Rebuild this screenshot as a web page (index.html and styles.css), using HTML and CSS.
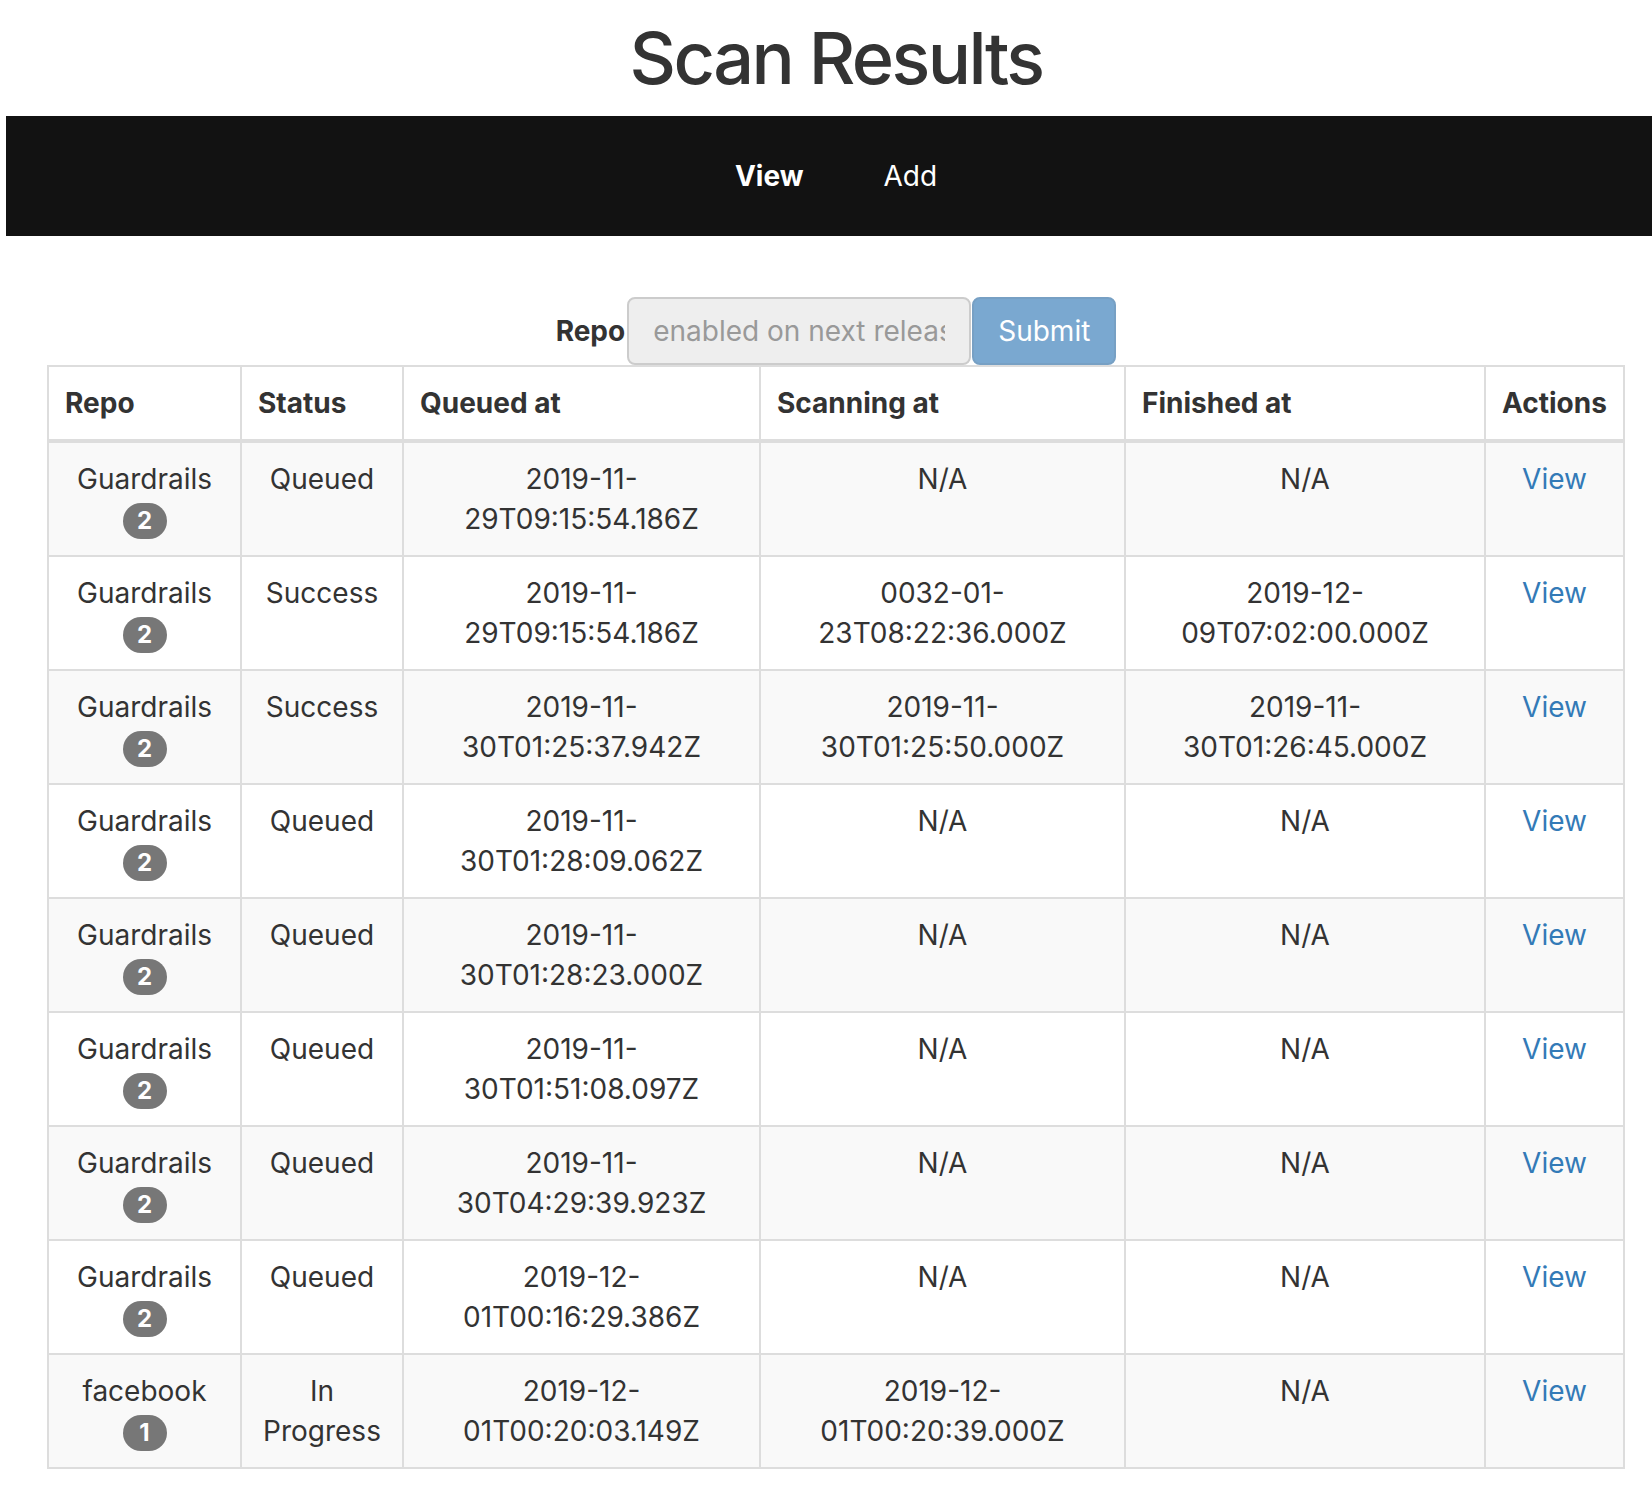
FILE: index.html
```html
<!DOCTYPE html>
<html lang="en">
<head>
<meta charset="utf-8">
<title>Scan Results</title>
<link rel="stylesheet" href="styles.css">
</head>
<body>
<div class="page">
  <h1 class="title">Scan Results</h1>
  <nav class="navbar">
    <a class="nav-link active" href="#">View</a>
    <a class="nav-link" href="#">Add</a>
  </nav>
  <form class="search-form">
    <label class="search-label" for="repo">Repo</label>
    <input class="search-input" id="repo" type="text" placeholder="enabled on next release" disabled>
    <button class="search-btn" type="button" disabled>Submit</button>
  </form>
  <table class="results">
    <colgroup>
      <col class="c-repo"><col class="c-status"><col class="c-queued"><col class="c-scan"><col class="c-fin"><col class="c-act">
    </colgroup>
    <thead>
      <tr><th>Repo</th><th>Status</th><th>Queued at</th><th>Scanning at</th><th>Finished at</th><th>Actions</th></tr>
    </thead>
    <tbody>
      <tr>
        <td>Guardrails<br><span class="badge">2</span></td>
        <td>Queued</td>
        <td>2019-11-<br>29T09:15:54.186Z</td>
        <td>N/A</td>
        <td>N/A</td>
        <td><a href="#" class="link">View</a></td>
      </tr>
      <tr>
        <td>Guardrails<br><span class="badge">2</span></td>
        <td>Success</td>
        <td>2019-11-<br>29T09:15:54.186Z</td>
        <td>0032-01-<br>23T08:22:36.000Z</td>
        <td>2019-12-<br>09T07:02:00.000Z</td>
        <td><a href="#" class="link">View</a></td>
      </tr>
      <tr>
        <td>Guardrails<br><span class="badge">2</span></td>
        <td>Success</td>
        <td>2019-11-<br>30T01:25:37.942Z</td>
        <td>2019-11-<br>30T01:25:50.000Z</td>
        <td>2019-11-<br>30T01:26:45.000Z</td>
        <td><a href="#" class="link">View</a></td>
      </tr>
      <tr>
        <td>Guardrails<br><span class="badge">2</span></td>
        <td>Queued</td>
        <td>2019-11-<br>30T01:28:09.062Z</td>
        <td>N/A</td>
        <td>N/A</td>
        <td><a href="#" class="link">View</a></td>
      </tr>
      <tr>
        <td>Guardrails<br><span class="badge">2</span></td>
        <td>Queued</td>
        <td>2019-11-<br>30T01:28:23.000Z</td>
        <td>N/A</td>
        <td>N/A</td>
        <td><a href="#" class="link">View</a></td>
      </tr>
      <tr>
        <td>Guardrails<br><span class="badge">2</span></td>
        <td>Queued</td>
        <td>2019-11-<br>30T01:51:08.097Z</td>
        <td>N/A</td>
        <td>N/A</td>
        <td><a href="#" class="link">View</a></td>
      </tr>
      <tr>
        <td>Guardrails<br><span class="badge">2</span></td>
        <td>Queued</td>
        <td>2019-11-<br>30T04:29:39.923Z</td>
        <td>N/A</td>
        <td>N/A</td>
        <td><a href="#" class="link">View</a></td>
      </tr>
      <tr>
        <td>Guardrails<br><span class="badge">2</span></td>
        <td>Queued</td>
        <td>2019-12-<br>01T00:16:29.386Z</td>
        <td>N/A</td>
        <td>N/A</td>
        <td><a href="#" class="link">View</a></td>
      </tr>
      <tr>
        <td>facebook<br><span class="badge">1</span></td>
        <td>In<br>Progress</td>
        <td>2019-12-<br>01T00:20:03.149Z</td>
        <td>2019-12-<br>01T00:20:39.000Z</td>
        <td>N/A</td>
        <td><a href="#" class="link">View</a></td>
      </tr>
    </tbody>
  </table>
</div>
</body>
</html>
```

FILE: styles.css
```css
html, body {
  margin: 0;
  padding: 0;
  overflow: hidden;
  background: #fff;
}

body {
  font-family: Inter, "Open Sans", "Liberation Sans", sans-serif;
  font-size: 28px;
  line-height: 40px;
  color: #333;
}

.page {
  width: 1660px;
  margin-left: 6px;
}

.title {
  margin: 18px 0 18px;
  font-size: 72px;
  line-height: 80px;
  font-weight: 500;
  letter-spacing: -2.6px;
  text-align: center;
  color: #333;
}

.navbar {
  height: 120px;
  background: #121212;
  display: flex;
  justify-content: center;
  align-items: center;
  gap: 80px;
}

.nav-link {
  color: #fff;
  text-decoration: none;
  font-size: 28px;
  line-height: 40px;
}

.nav-link.active {
  font-weight: 700;
}

.search-form {
  margin: 60px 0 0;
  display: flex;
  justify-content: center;
  align-items: center;
  height: 69px;
}

.search-label {
  font-weight: 700;
  margin-right: 2px;
}

.search-input {
  box-sizing: border-box;
  width: 344px;
  height: 68px;
  padding: 12px 24px;
  font-family: inherit;
  font-size: 28px;
  color: #555;
  background: #eee;
  border: 2px solid #ccc;
  border-radius: 8px;
  margin: 0 1px 0 0;
}

.search-input::placeholder {
  color: #999;
}

.search-btn {
  box-sizing: border-box;
  height: 68px;
  padding: 12px 24px;
  font-family: inherit;
  font-size: 28px;
  color: #fff;
  background: #7aa8d0;
  border: 2px solid #77a0c4;
  border-radius: 8px;
  margin: 0;
}

.results {
  width: 1576px;
  margin: 0 auto;
  table-layout: fixed;
  border-collapse: collapse;
  border: 2px solid #ddd;
}

.c-repo { width: 193px; }
.c-status { width: 162px; }
.c-queued { width: 357px; }
.c-scan { width: 365px; }
.c-fin { width: 360px; }
.c-act { width: 139px; }

.results th,
.results td {
  padding: 16px;
  border: 2px solid #ddd;
  line-height: 40px;
}

.results th {
  text-align: left;
  vertical-align: bottom;
  font-weight: 700;
  border-bottom: 4px solid #ddd;
}

.results td {
  text-align: center;
  vertical-align: top;
}

.results tbody tr:nth-child(odd) {
  background: #f9f9f9;
}

.badge {
  display: inline-block;
  min-width: 16px;
  padding: 6px 14px;
  margin: -2px 0;
  font-size: 24px;
  font-weight: 700;
  line-height: 1;
  color: #fff;
  background: #777;
  border-radius: 20px;
  vertical-align: middle;
  text-align: center;
}

.link {
  color: #337ab7;
  text-decoration: none;
}
```
